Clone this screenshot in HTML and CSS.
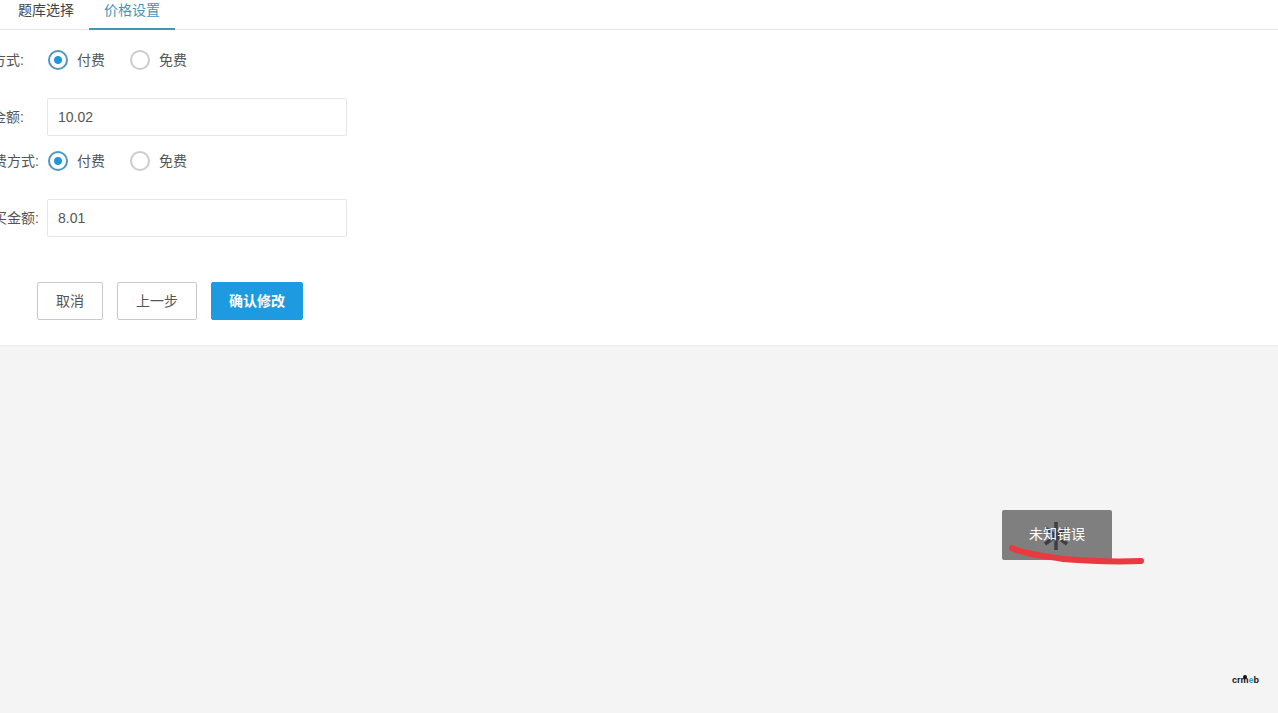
FILE: index.html
```html
<!DOCTYPE html>
<html>
  <head>
    <meta charset="UTF-8" />
    <meta name="viewport" content="width=device-width, initial-scale=1.0" />
    <title>价格设置</title>
    <link rel="stylesheet" href="styles.css">
  </head>
  <body>
    <div class="panel">
      <div class="tabs">
        <div class="tab">题库选择</div>
        <div class="tab tab-active">价格设置</div>
      </div>
      <form class="form">
        <div class="row row-radio">
          <label class="row-label label-short">方式:</label>
          <div class="radio-group">
            <span class="radio radio-on"><i></i><span class="radio-text">付费</span></span>
            <span class="radio"><i></i><span class="radio-text">免费</span></span>
          </div>
        </div>
        <div class="row row-input">
          <label class="row-label label-short">金额:</label>
          <input class="text-input" type="text" value="10.02" />
        </div>
        <div class="row row-radio">
          <label class="row-label">费方式:</label>
          <div class="radio-group">
            <span class="radio radio-on"><i></i><span class="radio-text">付费</span></span>
            <span class="radio"><i></i><span class="radio-text">免费</span></span>
          </div>
        </div>
        <div class="row row-input">
          <label class="row-label">买金额:</label>
          <input class="text-input" type="text" value="8.01" />
        </div>
        <div class="actions">
          <button type="button" class="btn btn-cancel">取消</button>
          <button type="button" class="btn btn-prev">上一步</button>
          <button type="button" class="btn btn-primary">确认修改</button>
        </div>
      </form>
    </div>

    <div class="toast">
      <svg class="spinner" width="32" height="32" viewBox="0 0 32 32">
        <g stroke="#3a3f44" stroke-width="3.5">
          <path d="M16 2v28" />
          <path d="M5 24l22-16" />
          <path d="M27 24L5 8" />
        </g>
      </svg>
      <span class="toast-text">未知错误</span>
    </div>

    <svg class="scribble" width="150" height="30" viewBox="0 0 150 30">
      <path d="M5 4C16 10 38 12 56 15C80 17 110 18 134 17" fill="none" stroke="#ea3a40" stroke-width="6" stroke-linecap="round" />
    </svg>

    <div class="brand"><i></i>crm<span>e</span>b</div>
  </body>
</html>
```

FILE: styles.css
```css
* {
  box-sizing: border-box;
  margin: 0;
  padding: 0;
}

html,
body {
  height: 100%;
  overflow: hidden;
}

body {
  position: relative;
  font-family: "Liberation Sans", "Noto Sans CJK SC", sans-serif;
  font-size: 14px;
  color: #555;
  background-color: #f4f4f4;
}

.panel {
  height: 346px;
  background-color: #fff;
  border-bottom: 1px solid #eee;
}

.tabs {
  display: flex;
  height: 30px;
  padding-left: 3px;
  border-bottom: 1px solid #e4e4e4;
}

.tab {
  width: 86px;
  height: 30px;
  line-height: 20px;
  text-align: center;
  color: #444;
}

.tab-active {
  color: #3f97b8;
  border-bottom: 2px solid #3f97b8;
}

.form {
  padding-top: 10px;
}

.row {
  display: flex;
  align-items: center;
  gap: 8px;
}

.row-radio {
  height: 40px;
  margin-bottom: 18px;
}

.row-input {
  height: 38px;
  margin-bottom: 5px;
}

.row-label {
  flex: none;
  display: flex;
  justify-content: flex-end;
  width: 39px;
  padding-bottom: 2px;
  overflow: hidden;
  white-space: nowrap;
}

.label-short {
  padding-right: 15px;
}

.radio-group {
  display: flex;
  gap: 25px;
  margin-left: 1px;
}

.radio {
  display: flex;
  align-items: center;
  gap: 9px;
}

.radio i {
  display: block;
  width: 20px;
  height: 20px;
  border: 2px solid #ccc;
  border-radius: 50%;
  background-color: #fff;
}

.radio-on i {
  border-color: #4f97bd;
  background: radial-gradient(circle, #1f96dc 0, #1f96dc 3.5px, #fff 4.5px);
}

.radio-text {
  margin-top: -2px;
}

.text-input {
  width: 300px;
  height: 38px;
  padding: 0 10px;
  border: 1px solid #e6e6e6;
  border-radius: 2px;
  font-family: inherit;
  font-size: 14px;
  color: #555;
}

.actions {
  display: flex;
  gap: 14px;
  margin-top: 45px;
  padding-left: 37px;
}

.btn {
  height: 38px;
  padding-bottom: 2px;
  border: 1px solid #c9c9c9;
  border-radius: 2px;
  background-color: #fff;
  font-family: inherit;
  font-size: 14px;
  color: #555;
}

.btn-cancel {
  width: 66px;
}

.btn-prev {
  width: 80px;
}

.btn-primary {
  width: 92px;
  border-color: #1e9be0;
  background-color: #1e9be0;
  color: #fff;
  font-weight: bold;
}

.toast {
  position: absolute;
  left: 1002px;
  top: 510px;
  display: flex;
  align-items: center;
  justify-content: center;
  width: 110px;
  height: 50px;
  border-radius: 2px;
  background-color: #7f7f7f;
  color: #fff;
}

.toast-text {
  position: relative;
  margin-top: -4px;
}

.spinner {
  position: absolute;
  left: 38px;
  top: 10px;
}

.scribble {
  position: absolute;
  left: 1007px;
  top: 544px;
}

.brand {
  position: absolute;
  left: 1232px;
  top: 675px;
  font-size: 9px;
  font-weight: bold;
  line-height: 11px;
  color: #111;
}

.brand i {
  position: absolute;
  left: 11px;
  top: 0;
  width: 4px;
  height: 4px;
  border-radius: 50%;
  background-color: #111;
}

.brand span {
  color: #1e9be0;
}
```
